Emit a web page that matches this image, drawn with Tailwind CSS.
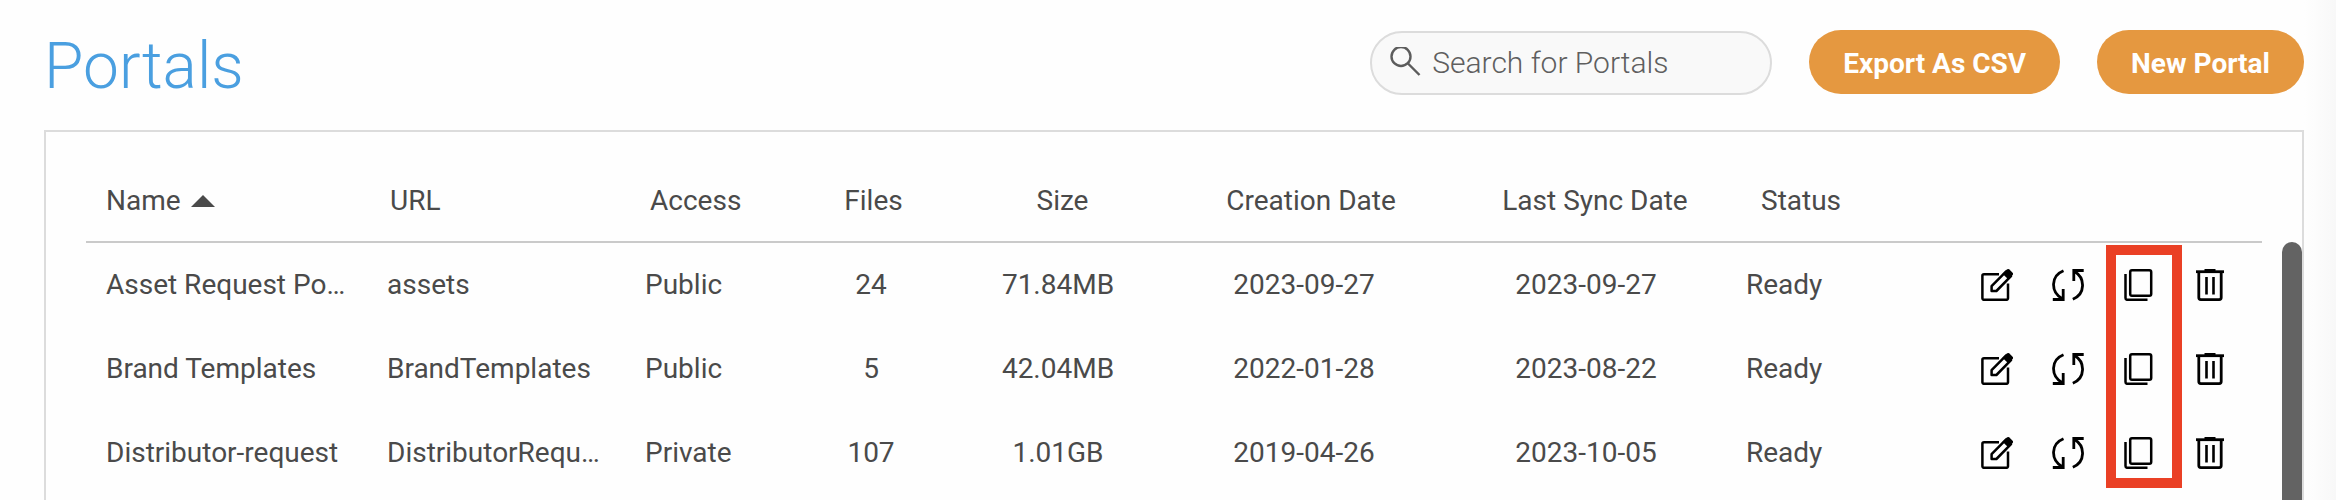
<!DOCTYPE html>
<html lang="en">
<head>
<meta charset="utf-8">
<title>Portals</title>
<script src="https://cdn.jsdelivr.net/npm/@tailwindcss/browser@4"></script>
</head>
<body class="min-h-screen overflow-hidden bg-[#fefefe] font-[Roboto,sans-serif] text-[28px] leading-8 text-[#4a4a4a]">
<svg class="hidden" aria-hidden="true">
  <symbol id="edit" viewBox="0 0 32 32">
    <g fill="none" stroke="#000" stroke-width="2.5" stroke-linejoin="round">
      <path d="M18 5.2H3a1.6 1.6 0 0 0-1.6 1.6v22.4a1.6 1.6 0 0 0 1.6 1.6h22.4a1.6 1.6 0 0 0 1.6-1.6V14.5"/>
      <path d="M10.6 17.2V22h4.8L30 7.2 25.2 2.4z"/>
    </g>
    <path d="M21.500 4.800 26 .5a1.800 1.800 0 0 1 2.400 0l3.200 3.200a1.800 1.800 0 0 1 0 2.400L27.400 10.500z"/>
  </symbol>
  <symbol id="sync" viewBox="0 0 32 32">
    <g fill="none" stroke="#000" stroke-width="2.8">
      <path d="M11.5 1.8C-1.5 7-1.500 23 10 29.500"/>
      <path d="M.8 30.500h10.400V20"/>
      <path d="M20.800 30.200C33.500 25 33.500 9 22.500 2.500"/>
      <path d="M31.700 1.500H21.800V12"/>
    </g>
  </symbol>
  <symbol id="copy" viewBox="0 0 32 32">
    <g fill="none" stroke="#000" stroke-width="2.5">
      <rect x="7.200" y="1.300" width="21" height="25.500" rx="1.800"/>
      <path d="M2.500 5V29a1.800 1.800 0 0 0 1.800 1.800H24.500"/>
    </g>
  </symbol>
  <symbol id="trash" viewBox="0 0 32 32">
    <g fill="none" stroke="#000" stroke-width="2.800">
      <path d="M2 2.700H30"/>
      <path d="M10.500 1.200H21.500" stroke-width="2.400"/>
      <path d="M4.800 3V28.600a2 2 0 0 0 2 2H25.200a2 2 0 0 0 2-2V3"/>
      <path d="M12.500 8V25.500M19.500 8V25.500" stroke-width="2.600"/>
    </g>
  </symbol>
</svg>

<div class="flex min-h-screen">
<main class="flex min-w-0 flex-1 flex-col pl-11">
  <header class="flex h-[130px] items-start pt-[30px]">
    <h1 class="flex-1 text-[64px] leading-[74px] font-light text-[#4a9fe0]">Portals</h1>
    <div class="flex items-start gap-[37px]">
      <label class="mt-px flex h-16 w-[402px] items-center gap-2.5 rounded-full border-2 border-[#dcdcdc] bg-[#f9f9f9] pr-6 pl-[18px]">
        <svg class="h-8 w-8 shrink-0" viewBox="0 0 32 32" fill="none" stroke="#5c5c5c" stroke-width="2.4" aria-hidden="true">
          <circle cx="11" cy="9.5" r="9.5"/><path d="M18 16.5 29.5 28"/>
        </svg>
        <input type="search" aria-label="Search for Portals" placeholder="Search for Portals" class="w-full min-w-0 bg-transparent text-[30px] font-light outline-none placeholder:text-[#5f5f5f]">
      </label>
      <button type="button" class="h-16 rounded-full bg-[#e59840] px-[34px] pt-1 font-bold text-white">Export As CSV</button>
      <button type="button" class="h-16 rounded-full bg-[#e59840] px-[34px] pt-1 font-bold text-white">New Portal</button>
    </div>
  </header>

  <section class="relative flex-1 overflow-hidden border-2 border-b-0 border-[#dcdcdc] pr-10 pl-10">
    <table class="w-full table-fixed border-separate border-spacing-0 whitespace-nowrap">
      <colgroup>
        <col class="w-[301px]"><col class="w-[258px]"><col class="w-[126px]"><col class="w-[200px]"><col class="w-[174px]"><col class="w-[318px]"><col class="w-[246px]"><col class="w-[252px]"><col>
      </colgroup>
      <thead>
        <tr class="h-[109px] shadow-[0_2px_0_#cacaca]">
          <th scope="col" class="pt-7 pl-5 text-left font-normal" aria-sort="ascending"><button type="button" class="flex items-center gap-2.5">Name <svg class="h-3 w-6" viewBox="0 0 24 12" fill="#4a4a4a" aria-hidden="true"><path d="M12 0 24 12H0z"/></svg></button></th>
          <th scope="col" class="pt-7 pl-[3px] text-left font-normal">URL</th>
          <th scope="col" class="pt-7 pl-[5px] text-left font-normal">Access</th>
          <th scope="col" class="pt-7 pl-[5px] font-normal">Files</th>
          <th scope="col" class="pt-7 pl-[9px] font-normal">Size</th>
          <th scope="col" class="pt-7 pl-[14px] font-normal">Creation Date</th>
          <th scope="col" class="pt-7 pl-[18px] font-normal">Last Sync Date</th>
          <th scope="col" class="pt-7 pl-[52px] text-left font-normal">Status</th>
          <td></td>
        </tr>
      </thead>
      <tbody>
        <tr class="h-[84px]">
          <td class="truncate pt-[3px] pr-9 pl-5">Asset Request Portal</td><td class="truncate pt-[3px] pr-9">assets</td><td class="pt-[3px]">Public</td><td class="pt-[3px] text-center">24</td><td class="pt-[3px] text-center">71.84MB</td><td class="pt-[3px] text-center">2023-09-27</td><td class="pt-[3px] text-center">2023-09-27</td><td class="pt-[3px] pl-[37px]">Ready</td>
          <td class="pt-[3px] pr-9"><div class="flex justify-end gap-[39px]">
            <button type="button" aria-label="Edit"><svg class="size-8"><use href="#edit"/></svg></button>
            <button type="button" aria-label="Sync"><svg class="size-8"><use href="#sync"/></svg></button>
            <button type="button" aria-label="Copy"><svg class="size-8"><use href="#copy"/></svg></button>
            <button type="button" aria-label="Delete"><svg class="size-8"><use href="#trash"/></svg></button>
          </div></td>
        </tr>
        <tr class="h-[84px]">
          <td class="truncate pt-[3px] pr-9 pl-5">Brand Templates</td><td class="truncate pt-[3px] pr-9">BrandTemplates</td><td class="pt-[3px]">Public</td><td class="pt-[3px] text-center">5</td><td class="pt-[3px] text-center">42.04MB</td><td class="pt-[3px] text-center">2022-01-28</td><td class="pt-[3px] text-center">2023-08-22</td><td class="pt-[3px] pl-[37px]">Ready</td>
          <td class="pt-[3px] pr-9"><div class="flex justify-end gap-[39px]">
            <button type="button" aria-label="Edit"><svg class="size-8"><use href="#edit"/></svg></button>
            <button type="button" aria-label="Sync"><svg class="size-8"><use href="#sync"/></svg></button>
            <button type="button" aria-label="Copy"><svg class="size-8"><use href="#copy"/></svg></button>
            <button type="button" aria-label="Delete"><svg class="size-8"><use href="#trash"/></svg></button>
          </div></td>
        </tr>
        <tr class="h-[84px]">
          <td class="truncate pt-[3px] pr-9 pl-5">Distributor-request</td><td class="truncate pt-[3px] pr-9">DistributorRequest</td><td class="pt-[3px]">Private</td><td class="pt-[3px] text-center">107</td><td class="pt-[3px] text-center">1.01GB</td><td class="pt-[3px] text-center">2019-04-26</td><td class="pt-[3px] text-center">2023-10-05</td><td class="pt-[3px] pl-[37px]">Ready</td>
          <td class="pt-[3px] pr-9"><div class="flex justify-end gap-[39px]">
            <button type="button" aria-label="Edit"><svg class="size-8"><use href="#edit"/></svg></button>
            <button type="button" aria-label="Sync"><svg class="size-8"><use href="#sync"/></svg></button>
            <button type="button" aria-label="Copy"><svg class="size-8"><use href="#copy"/></svg></button>
            <button type="button" aria-label="Delete"><svg class="size-8"><use href="#trash"/></svg></button>
          </div></td>
        </tr>
      </tbody>
    </table>
    <!-- highlight around the copy buttons -->
    <div class="pointer-events-none absolute top-[113px] right-[120px] h-[243px] w-[76px] border-10 border-[#ea4025]"></div>
    <!-- scrollbar thumb -->
    <div class="absolute top-[110px] right-0 -bottom-5 w-5 rounded-full bg-[#636363]"></div>
  </section>
</main>
<div class="w-8 shrink-0 bg-linear-to-r from-[#fefefe] to-[#f8f8f8]"></div>
</div>
</body>
</html>
